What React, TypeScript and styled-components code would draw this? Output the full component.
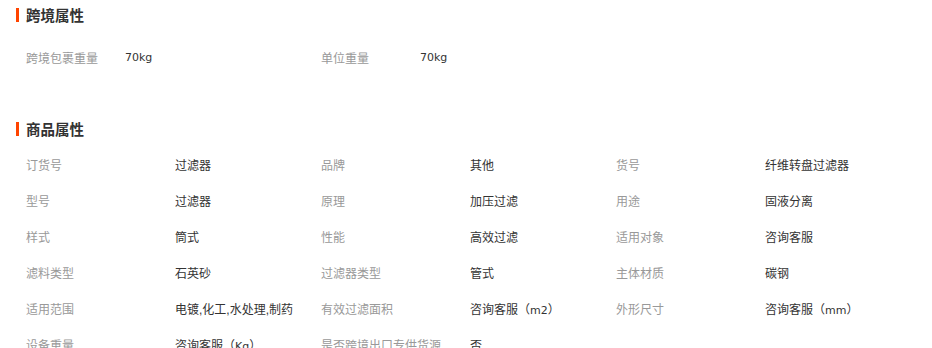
import React from "react";
import styled, { createGlobalStyle } from "styled-components";

const GlobalStyle = createGlobalStyle`
  body {
    margin: 0;
    background: #fff;
    font-family: "Liberation Sans", "Noto Sans CJK SC", sans-serif;
    font-size: 12px;
    color: #333;
  }
`;

interface Attr {
  label: string;
  value: React.ReactNode;
}

const crossBorder: Attr[] = [
  { label: "跨境包裹重量", value: "70kg" },
  { label: "单位重量", value: "70kg" },
];

const Unit = ({ children }: { children: string }) => (
  <>
    咨询客服（<SUnit>{children}</SUnit>）
  </>
);

const productAttrs: Attr[] = [
  { label: "订货号", value: "过滤器" },
  { label: "品牌", value: "其他" },
  { label: "货号", value: "纤维转盘过滤器" },
  { label: "型号", value: "过滤器" },
  { label: "原理", value: "加压过滤" },
  { label: "用途", value: "固液分离" },
  { label: "样式", value: "筒式" },
  { label: "性能", value: "高效过滤" },
  { label: "适用对象", value: "咨询客服" },
  { label: "滤料类型", value: "石英砂" },
  { label: "过滤器类型", value: "管式" },
  { label: "主体材质", value: "碳钢" },
  { label: "适用范围", value: "电镀,化工,水处理,制药" },
  { label: "有效过滤面积", value: <Unit>m2</Unit> },
  { label: "外形尺寸", value: <Unit>mm</Unit> },
  { label: "设备重量", value: <Unit>Kg</Unit> },
  { label: "是否跨境出口专供货源", value: "否" },
];

export default function App() {
  return (
    <>
      <GlobalStyle />
      <SPage>
        <SSection>
          <STitle>跨境属性</STitle>
          <SGrid $labelWidth={99} $top={10}>
            {crossBorder.map((a) => (
              <SItem key={a.label}>
                <SLabel>{a.label}</SLabel>
                <SValue $latin>{a.value}</SValue>
              </SItem>
            ))}
          </SGrid>
        </SSection>
        <SSection $top={39}>
          <STitle>商品属性</STitle>
          <SGrid $labelWidth={149} $top={3}>
            {productAttrs.map((a) => (
              <SItem key={a.label}>
                <SLabel>{a.label}</SLabel>
                <SValue>{a.value}</SValue>
              </SItem>
            ))}
          </SGrid>
        </SSection>
      </SPage>
    </>
  );
}

const SPage = styled.div`
  width: 932px;
  padding-left: 16px;
`;

const SSection = styled.section<{ $top?: number }>`
  margin-top: ${({ $top }) => $top ?? 0}px;
`;

const STitle = styled.h3`
  margin: 0;
  height: 29px;
  display: flex;
  align-items: center;
  font-size: 14.5px;
  font-weight: bold;
  color: #333;
  &::before {
    content: "";
    width: 3px;
    height: 14px;
    background: #ff4400;
    margin-right: 7px;
  }
`;

const SGrid = styled.div<{ $labelWidth: number; $top: number }>`
  margin-top: ${({ $top }) => $top}px;
  padding-left: 10px;
  display: grid;
  grid-template-columns: repeat(3, 295px);
  & > div {
    grid-template-columns: ${({ $labelWidth }) => $labelWidth}px 1fr;
  }
`;

const SItem = styled.div`
  display: grid;
  height: 36px;
  align-items: center;
`;

const SLabel = styled.span`
  color: #999;
  white-space: nowrap;
`;

const SValue = styled.span<{ $latin?: boolean }>`
  color: #333;
  white-space: nowrap;
  font-family: ${({ $latin }) =>
    $latin ? '"DejaVu Sans", "Noto Sans CJK SC", sans-serif' : "inherit"};
  font-size: ${({ $latin }) => ($latin ? "11px" : "12px")};
`;

const SUnit = styled.span`
  font-family: "DejaVu Sans", sans-serif;
  font-size: 11px;
`;
